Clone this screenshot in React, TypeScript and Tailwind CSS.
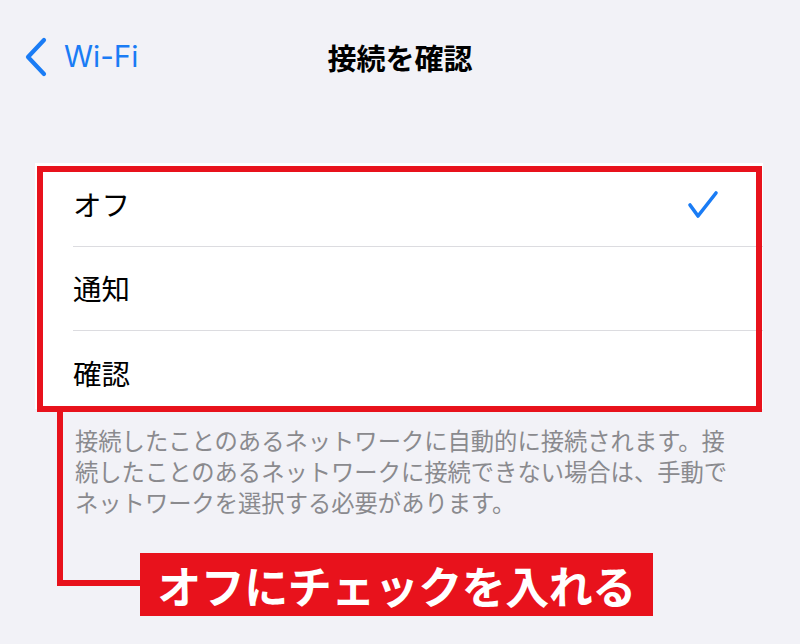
import React from "react";

const jp = { fontFamily: '"Noto Sans CJK JP", "Noto Sans", sans-serif' };

export default function App() {
  const rows = ["オフ", "通知", "確認"];
  return (
    <div
      className="relative w-[800px] h-[644px] overflow-hidden bg-[#f2f2f7]"
      style={jp}
    >
      {/* Nav bar */}
      <div className="relative flex h-[114px] items-center">
        <div className="flex items-center pl-[24px]">
          <svg width="26" height="40" viewBox="0 0 26 40" className="mr-[14px]">
            <path
              d="M20 3 L4 20 L20 37"
              fill="none"
              stroke="#1a7cf5"
              strokeWidth="4.2"
              strokeLinecap="round"
              strokeLinejoin="round"
            />
          </svg>
          <span
            className="text-[29.5px] leading-none text-[#1a7cf5]"
            style={{ fontFamily: '"Inter", "Roboto", sans-serif' }}
          >
            Wi-Fi
          </span>
        </div>
        <div className="absolute inset-x-0 top-0 flex h-[114px] items-center justify-center pointer-events-none">
          <span className="text-[29px] font-bold leading-none text-black">接続を確認</span>
        </div>
      </div>

      {/* List */}
      <div className="mt-[49px] ml-[35px] mr-[37px] h-[246px] overflow-hidden bg-white">
        {rows.map((r, i) => (
          <div key={r} className="flex h-[84px] flex-col pl-[38px]">
            <div className="flex flex-1 items-center justify-between pr-[44px]">
              <span className="text-[28.5px] leading-none text-black">{r}</span>
              {i === 0 && (
                <svg width="32" height="30" viewBox="0 0 32 30">
                  <path
                    d="M3 15 L11 26 L29 3"
                    fill="none"
                    stroke="#1a7cf5"
                    strokeWidth="3.6"
                    strokeLinecap="round"
                    strokeLinejoin="round"
                  />
                </svg>
              )}
            </div>
            {i < rows.length - 1 && <div className="h-px bg-[#dcdce0]" />}
          </div>
        ))}
      </div>

      {/* Footer */}
      <div className="mt-[16px] pl-[75px] text-[23.3px] leading-[31px] text-[#8a8a8e]">
        <div className="whitespace-nowrap">接続したことのあるネットワークに自動的に接続されます。接</div>
        <div className="whitespace-nowrap">続したことのあるネットワークに接続できない場合は、手動で</div>
        <div className="whitespace-nowrap">ネットワークを選択する必要があります。</div>
      </div>

      {/* Annotation overlay */}
      <div className="absolute left-[37px] top-[166px] h-[246px] w-[725px] border-[6px] border-[#e8121c]" />
      <div className="absolute left-[57px] top-[410px] h-[176px] w-[6px] bg-[#e8121c]" />
      <div className="absolute left-[57px] top-[580px] h-[6px] w-[84px] bg-[#e8121c]" />
      <div className="absolute left-[140px] top-[553px] flex h-[63px] w-[513px] items-center justify-center bg-[#e8121c]">
        <span className="text-[44px] font-bold leading-none text-white tracking-[-0.5px]">
          オフにチェックを入れる
        </span>
      </div>
    </div>
  );
}
